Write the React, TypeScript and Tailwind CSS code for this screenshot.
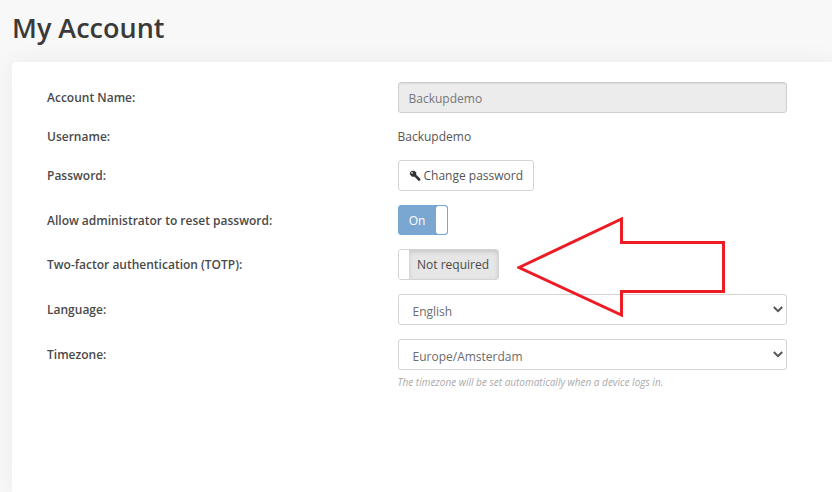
import { useState } from "react";
import type { ReactNode } from "react";

interface FieldRowProps {
    label: string;
    htmlFor?: string;
    children: ReactNode;
}

function FieldRow({ label, htmlFor, children }: FieldRowProps) {
    return (
        <div className="grid grid-cols-[9fr_10fr] items-center">
            <label htmlFor={htmlFor} className="font-semibold text-[#4a4a4a]">
                {label}
            </label>
            <div className="flex items-center">{children}</div>
        </div>
    );
}

interface SelectFieldProps {
    id: string;
    value: string;
    options: string[];
    onChange: (value: string) => void;
}

function SelectField({ id, value, options, onChange }: SelectFieldProps) {
    return (
        <div className="relative w-full">
            <select
                id={id}
                value={value}
                onChange={(e) => onChange(e.target.value)}
                className="block h-[31px] w-full appearance-none rounded-[3px] border border-[#d4d4d4] bg-white pt-1 pr-8 pl-3.5 text-[#6c6c6c]"
            >
                {options.map((option) => (
                    <option key={option}>{option}</option>
                ))}
            </select>
            <svg viewBox="0 0 10 7" className="pointer-events-none absolute top-3 right-1 h-[7px] w-2.5" fill="none" stroke="#555" strokeWidth="2">
                <path d="M0.8 1 L5 5.2 L9.2 1" />
            </svg>
        </div>
    );
}

function WrenchIcon() {
    return (
        <svg viewBox="0 0 12 12" className="h-3 w-3" aria-hidden="true">
            <path
                fill="#333"
                fillRule="evenodd"
                d="M2.6 0.9 L5.2 0.7 L7.3 2.6 L7.2 4.7 L11.3 8.8 L11.3 10.6 L9.6 10.9 L5.6 6.8 L3.2 6.7 L0.9 4.5 L0.9 2.5 Z M2.2 2.1 L2.4 3.5 L3.8 3.7 L3.7 2.2 Z"
            />
        </svg>
    );
}

export default function App() {
    const [allowReset, setAllowReset] = useState(true);
    const [totpRequired, setTotpRequired] = useState(false);
    const [language, setLanguage] = useState("English");
    const [timezone, setTimezone] = useState("Europe/Amsterdam");

    return (
        <div className="relative flex min-h-screen flex-col overflow-hidden bg-[#f8f8f8] pl-3 font-['Open_Sans','Noto_Sans',sans-serif] text-[12px] leading-[19px] text-[#555]">
            <h1 className="pt-2.5 pb-4 text-[27px] leading-9 font-semibold text-[#3a3a3a]">My Account</h1>

            <main className="flex flex-1 flex-col gap-3.5 rounded-tl-[4px] bg-white pt-5 pr-[45px] pb-10 pl-[35px] shadow-[0_0_24px_rgba(0,0,0,0.06)]">
                <FieldRow label="Account Name:" htmlFor="account-name">
                    <input
                        id="account-name"
                        type="text"
                        value="Backupdemo"
                        disabled
                        className="h-[31px] w-full rounded-[3px] border border-[#d0d0d0] bg-[#ececec] px-2.5 pt-0.5 text-[#777] shadow-[inset_0_1px_1px_rgba(0,0,0,0.08)]"
                    />
                </FieldRow>

                <FieldRow label="Username:">
                    <span>Backupdemo</span>
                </FieldRow>

                <FieldRow label="Password:" htmlFor="change-password">
                    <button
                        id="change-password"
                        type="button"
                        className="flex h-[31px] items-center gap-[3px] rounded-[3px] border border-[#d4d4d4] bg-white px-2.5"
                    >
                        <WrenchIcon />
                        Change password
                    </button>
                </FieldRow>

                <FieldRow label="Allow administrator to reset password:" htmlFor="allow-reset">
                    <button
                        id="allow-reset"
                        type="button"
                        role="switch"
                        aria-checked={allowReset}
                        onClick={() => setAllowReset(!allowReset)}
                        className="flex h-[30px] w-[50px] rounded-[3px] border border-[#7aa7d2] bg-[#7aa7d2] text-white"
                    >
                        <span className="flex-1 self-center">{allowReset ? "On" : "Off"}</span>
                        <span className="h-full w-[11px] rounded-[3px] bg-white" />
                    </button>
                </FieldRow>

                <FieldRow label="Two-factor authentication (TOTP):" htmlFor="totp">
                    <button
                        id="totp"
                        type="button"
                        role="switch"
                        aria-checked={totpRequired}
                        onClick={() => setTotpRequired(!totpRequired)}
                        className="flex h-[31px] w-[101px] overflow-hidden rounded-[3px] border border-[#d4d4d4] bg-white"
                    >
                        <span className="h-full w-2.5 bg-white" />
                        <span className="flex h-full flex-1 items-center justify-center bg-[#e6e6e6] whitespace-nowrap text-[#4a4a4a] shadow-[inset_0_2px_4px_rgba(0,0,0,0.14)]">
                            {totpRequired ? "Required" : "Not required"}
                        </span>
                    </button>
                </FieldRow>

                <FieldRow label="Language:" htmlFor="language">
                    <SelectField id="language" value={language} options={["English", "Nederlands", "Deutsch"]} onChange={setLanguage} />
                </FieldRow>

                <div className="flex flex-col gap-1">
                    <FieldRow label="Timezone:" htmlFor="timezone">
                        <SelectField id="timezone" value={timezone} options={["Europe/Amsterdam", "Europe/London", "UTC"]} onChange={setTimezone} />
                    </FieldRow>
                    <div className="grid grid-cols-[9fr_10fr]">
                        <p className="col-start-2 text-[10px] leading-4 text-[#aaa] italic">
                            The timezone will be set automatically when a device logs in.
                        </p>
                    </div>
                </div>
            </main>

            {/* Callout arrow pointing at the TOTP switch */}
            <svg viewBox="0 0 208 100" className="pointer-events-none absolute top-[217px] left-[517px] h-[100px] w-[208px]" aria-hidden="true">
                <path d="M2 50.5 L104.5 2 V25.5 H206.5 V74.5 H104.5 V98 Z" fill="none" stroke="#ed1c24" strokeWidth="3" />
            </svg>
        </div>
    );
}
